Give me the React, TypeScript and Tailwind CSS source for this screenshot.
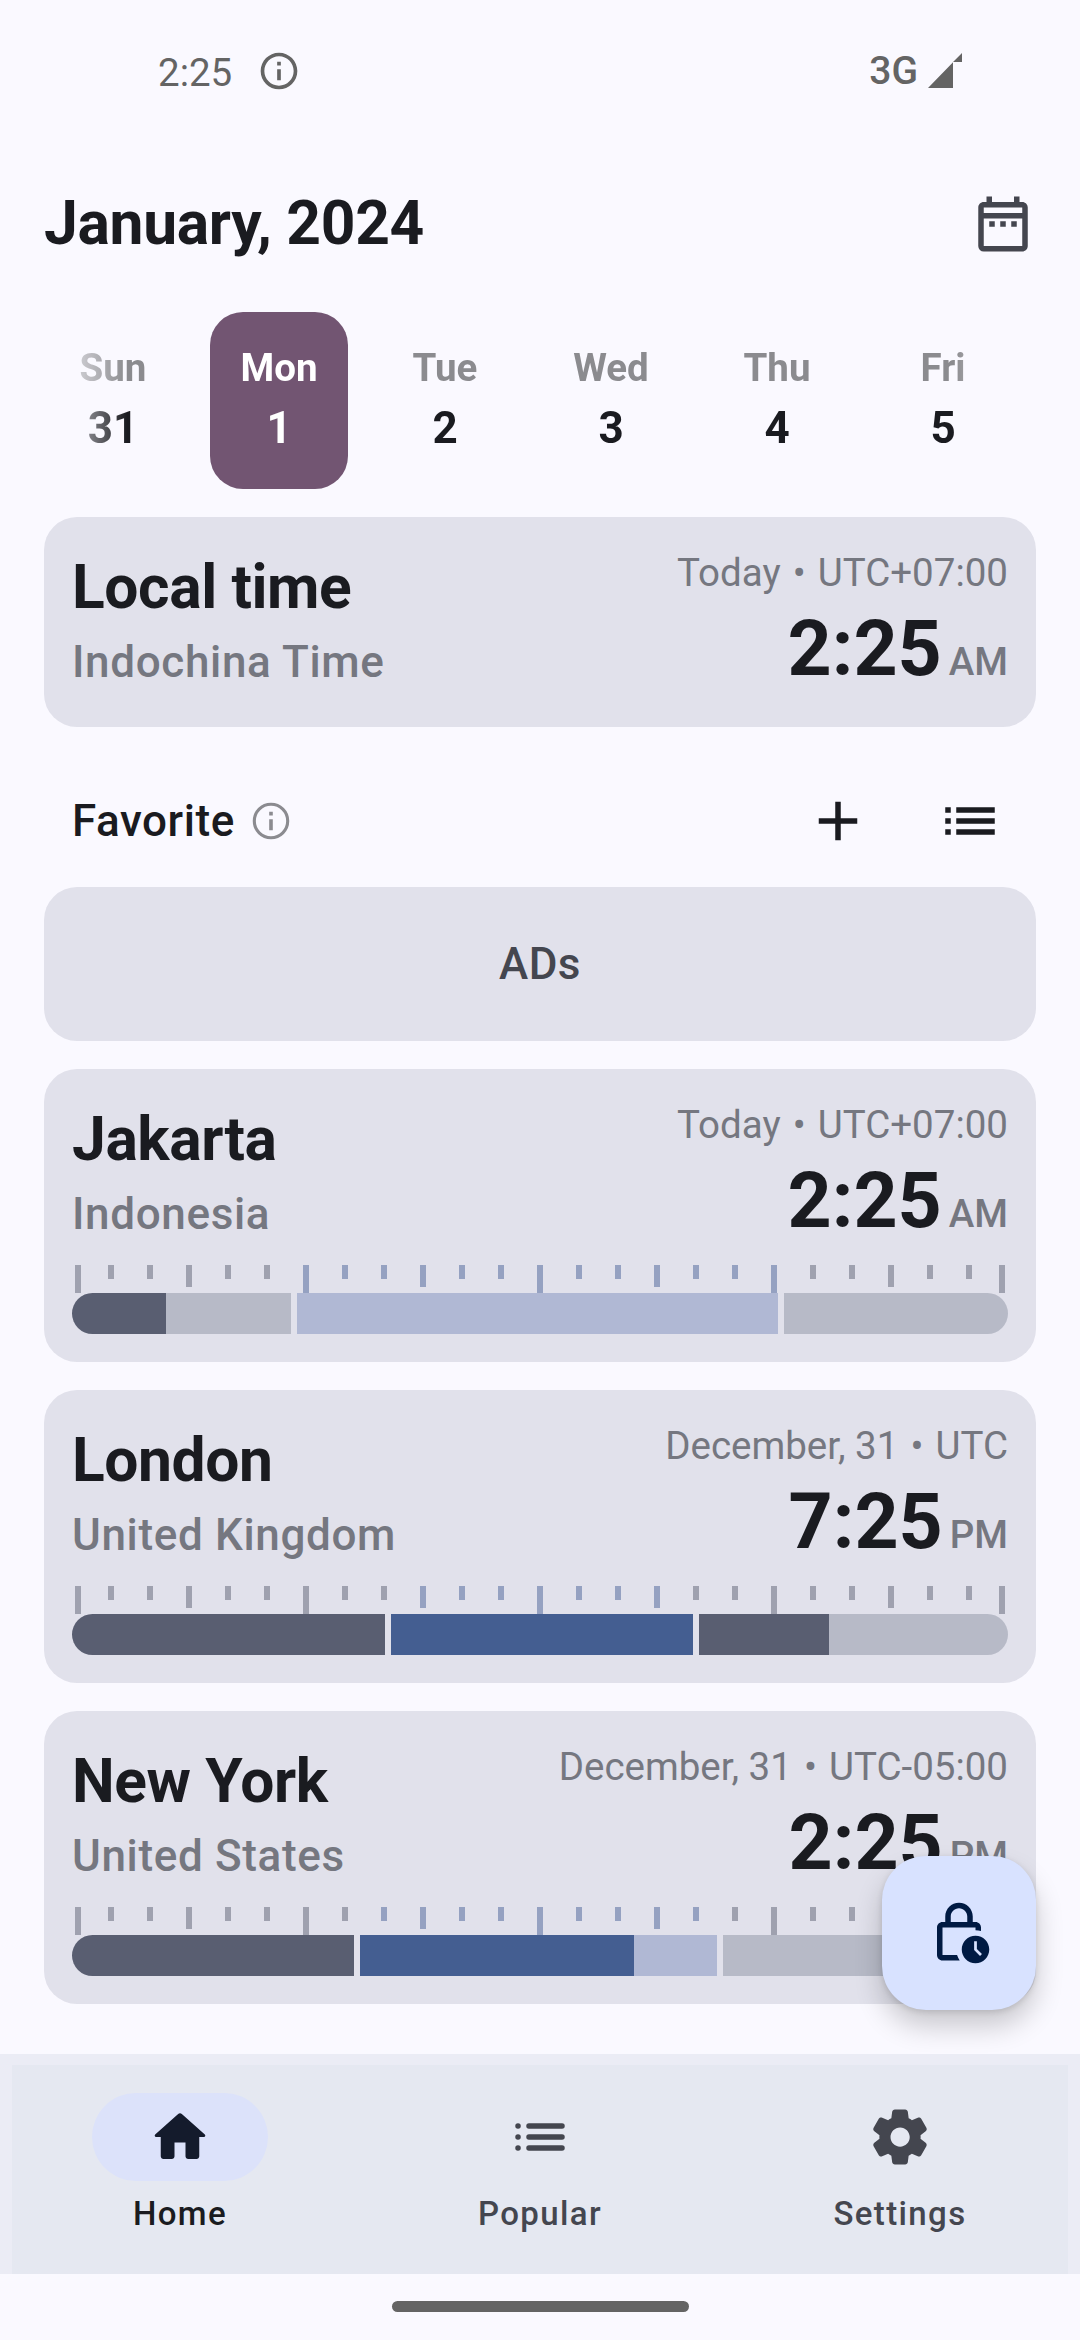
import React from "react";
import {
  MdAdd,
  MdInfoOutline,
  MdList,
  MdOutlineDateRange,
  MdOutlineLockClock,
} from "react-icons/md";

type Segment = { width: number; color: string };

type ClockInfo = {
  name: string;
  region: string;
  day: string;
  zone: string;
  time: string;
  period: string;
};

type City = ClockInfo & {
  dayStart: number;
  dayEnd: number;
  groups: Segment[][];
};

const NIGHT_PAST = "bg-[#595e71]";
const NIGHT_AHEAD = "bg-[#b7bac7]";
const DAY_PAST = "bg-[#445e91]";
const DAY_AHEAD = "bg-[#b0b8d4]";

const days = [
  { name: "Sun", date: "31" },
  { name: "Mon", date: "1" },
  { name: "Tue", date: "2" },
  { name: "Wed", date: "3" },
  { name: "Thu", date: "4" },
  { name: "Fri", date: "5" },
];

const cities: City[] = [
  {
    name: "Jakarta",
    region: "Indonesia",
    day: "Today",
    zone: "UTC+07:00",
    time: "2:25",
    period: "AM",
    dayStart: 6,
    dayEnd: 18,
    groups: [
      [
        { width: 94, color: NIGHT_PAST },
        { width: 125, color: NIGHT_AHEAD },
      ],
      [{ width: 481, color: DAY_AHEAD }],
      [{ width: 224, color: NIGHT_AHEAD }],
    ],
  },
  {
    name: "London",
    region: "United Kingdom",
    day: "December, 31",
    zone: "UTC",
    time: "7:25",
    period: "PM",
    dayStart: 9,
    dayEnd: 15,
    groups: [
      [{ width: 313, color: NIGHT_PAST }],
      [{ width: 302, color: DAY_PAST }],
      [
        { width: 130, color: NIGHT_PAST },
        { width: 179, color: NIGHT_AHEAD },
      ],
    ],
  },
  {
    name: "New York",
    region: "United States",
    day: "December, 31",
    zone: "UTC-05:00",
    time: "2:25",
    period: "PM",
    dayStart: 8,
    dayEnd: 16,
    groups: [
      [{ width: 282, color: NIGHT_PAST }],
      [
        { width: 274, color: DAY_PAST },
        { width: 83, color: DAY_AHEAD },
      ],
      [{ width: 285, color: NIGHT_AHEAD }],
    ],
  },
];

function StatusBar() {
  return (
    <div className="flex h-[158px] shrink-0 items-start pl-[158px] pr-[118px] text-[#646464]">
      <span className="mt-[51px] text-[38.5px] leading-[44px]">2:25</span>
      <MdInfoOutline className="ml-[25px] mt-[49px] size-[44px]" />
      <span className="ml-auto mt-[49px] text-[39px] font-medium leading-[44px]">3G</span>
      <svg className="ml-[10px] mt-[53px] h-[35px] w-[34px]" viewBox="0 0 34 35" fill="currentColor">
        <path d="M0 35 25 9.300V35zM25 9 34 0V9z" />
      </svg>
    </div>
  );
}

function Header() {
  return (
    <header className="flex h-[132px] shrink-0 items-center justify-between px-[44px]">
      <h1 className="text-[60.5px] font-bold leading-[84px] tracking-[-0.3px] text-[#1a1b20]">January, 2024</h1>
      <MdOutlineDateRange className="size-[66px] text-[#44464f]" />
    </header>
  );
}

function DayStrip() {
  return (
    <div className="mx-[44px] mt-[22px] flex shrink-0 gap-[28px] overflow-hidden [mask-image:linear-gradient(to_right,transparent,black_83px,black_909px,transparent)]">
      {days.map((day) => {
        const selected = day.name === "Mon";
        return (
          <div
            key={day.name}
            className={`flex h-[177px] w-[138px] shrink-0 flex-col items-center rounded-[33px] pt-[28px] font-bold ${
              selected ? "bg-[#725572] text-white" : "text-[#1a1b20]"
            }`}
          >
            <span className={`text-[38.5px] leading-[55px] ${selected ? "" : "text-[#8b8b8f]"}`}>
              {day.name}
            </span>
            <span className="text-[44px] leading-[66px]">{day.date}</span>
          </div>
        );
      })}
    </div>
  );
}

function ClockRow({ name, region, day, zone, time, period }: ClockInfo) {
  return (
    <div className="flex h-[150px] justify-between">
      <div className="flex flex-col">
        <h2 className="text-[60.5px] font-bold leading-[86px] tracking-[-0.4px] text-[#1a1b20]">{name}</h2>
        <p className="text-[44px] font-medium leading-[62px] tracking-[0.65px] text-[#757780]">{region}</p>
      </div>
      <div className="flex flex-col items-end">
        <p className="text-[38.5px] leading-[55px] text-[#757780]">
          {day} <span className="mx-[2.5px]">•</span> {zone}
        </p>
        <p className="flex items-baseline gap-[7px] leading-[99px]">
          <span className="text-[77px] font-bold text-[#1a1b20]">{time}</span>
          <span className="text-[38.5px] font-medium text-[#757780]">{period}</span>
        </p>
      </div>
    </div>
  );
}

function Ruler({ dayStart, dayEnd }: { dayStart: number; dayEnd: number }) {
  return (
    <div className="mt-[18px] flex h-[28px] gap-[33px] px-[3px]">
      {Array.from({ length: 25 }, (_, hour) => {
        const height = hour % 6 === 0 ? "h-[28px]" : hour % 3 === 0 ? "h-[22px]" : "h-[14px]";
        const color = hour >= dayStart && hour <= dayEnd ? "bg-[#95a1c1]" : "bg-[#9fa1af]";
        const edge = hour === 0 ? "-mr-[6px]" : hour === 24 ? "-ml-[6px]" : "";
        return <span key={hour} className={`w-[6px] shrink-0 ${height} ${color} ${edge}`} />;
      })}
    </div>
  );
}

function CityCard({ city }: { city: City }) {
  return (
    <article className="mt-[28px] h-[293px] shrink-0 rounded-[33px] bg-[#e1e1eb] p-[28px]">
      <ClockRow {...city} />
      <Ruler dayStart={city.dayStart} dayEnd={city.dayEnd} />
      <div className="flex h-[41px] gap-[6px] overflow-hidden rounded-full">
        {city.groups.map((group, i) => (
          <div key={i} className="flex">
            {group.map((segment, j) => (
              <div key={j} className={segment.color} style={{ width: segment.width }} />
            ))}
          </div>
        ))}
      </div>
    </article>
  );
}

function FavoriteHeader() {
  return (
    <div className="mt-[28px] flex h-[132px] shrink-0 items-center pl-[28px] text-[#1a1b20]">
      <h3 className="text-[44px] font-medium leading-[66px] tracking-[0.55px]">Favorite</h3>
      <svg className="ml-[14px] size-[44px] text-[#8b8b90]" viewBox="0 0 44 44" fill="none">
        <circle cx="22" cy="22" r="16.700" stroke="currentColor" strokeWidth="3.100" />
        <path d="M20.200 12.800h3.600v3.600h-3.600zM20.200 20.200h3.600v11h-3.600z" fill="currentColor" />
      </svg>
      <div className="ml-auto flex">
        <button className="flex size-[132px] items-center justify-center">
          <MdAdd className="size-[66px]" />
        </button>
        <button className="flex size-[132px] items-center justify-center">
          <MdList className="size-[66px]" />
        </button>
      </div>
    </div>
  );
}

function HomeIcon() {
  return (
    <svg className="size-[66px]" viewBox="0 0 24 24" fill="currentColor">
      <path d="M10 19v-5h4v5c0 .55.45 1 1 1h3c.55 0 1-.45 1-1v-7h1.700c.46 0 .68-.57.33-.87L12.670 3.600c-.38-.34-.96-.34-1.340 0l-8.360 7.530c-.34.3-.13.87.33.87H5v7c0 .55.45 1 1 1h3c.55 0 1-.45 1-1z" />
    </svg>
  );
}

function RoundListIcon() {
  return (
    <svg className="size-[66px]" viewBox="0 0 24 24" stroke="currentColor" strokeWidth="2" strokeLinecap="round">
      <path d="M4 8h.01M4 12h.01M4 16h.01M8 8h12M8 12h12M8 16h12" />
    </svg>
  );
}

function SettingsIcon() {
  return (
    <svg className="size-[66px]" viewBox="0 0 24 24" fill="currentColor">
      <path d="M19.500 12c0-.23-.01-.45-.03-.68l1.860-1.410c.4-.3.51-.86.26-1.300l-1.870-3.230c-.25-.44-.79-.62-1.250-.42l-2.150.91c-.37-.26-.76-.49-1.170-.68l-.29-2.310c-.06-.5-.49-.88-.99-.88h-3.730c-.51 0-.94.38-1 .88l-.29 2.310c-.41.19-.8.42-1.170.68l-2.150-.91c-.46-.2-1-.02-1.250.42L2.410 8.620c-.25.44-.14.99.26 1.300l1.860 1.410c-.02.22-.03.44-.03.67s.01.45.03.68l-1.860 1.410c-.4.3-.51.86-.26 1.300l1.870 3.230c.25.44.79.62 1.250.42l2.150-.91c.37.26.76.49 1.170.68l.29 2.310c.06.5.49.88.99.88h3.730c.5 0 .93-.38.99-.88l.29-2.310c.41-.19.8-.42 1.170-.68l2.150.91c.46.2 1 .02 1.250-.42l1.870-3.230c.25-.44.14-.99-.26-1.300l-1.860-1.410c.03-.23.04-.45.04-.68zm-7.460 3.500c-1.930 0-3.500-1.570-3.500-3.500s1.570-3.500 3.500-3.500 3.500 1.570 3.500 3.500-1.570 3.500-3.500 3.500z" />
    </svg>
  );
}

function NavItem({ label, active, children }: { label: string; active?: boolean; children: React.ReactNode }) {
  return (
    <button className={`flex flex-1 flex-col items-center pt-[28px] ${active ? "text-[#141b2c]" : "text-[#44464f]"}`}>
      <span
        className={`flex h-[88px] w-[176px] items-center justify-center rounded-full ${
          active ? "bg-[#dce2fa]" : ""
        }`}
      >
        {children}
      </span>
      <span
        className={`mt-[11px] text-[33px] font-medium leading-[44px] tracking-[1.375px] ${
          active ? "text-[#1a1b20]" : ""
        }`}
      >
        {label}
      </span>
    </button>
  );
}

function BottomNav() {
  return (
    <nav className="h-[220px] shrink-0 bg-[#ebecf5] px-[12px] pt-[11px]">
      <div className="h-full bg-[#e5e8f1]">
        <div className="-mx-[12px] flex">
          <NavItem label="Home" active>
            <HomeIcon />
          </NavItem>
          <NavItem label="Popular">
            <RoundListIcon />
          </NavItem>
          <NavItem label="Settings">
            <SettingsIcon />
          </NavItem>
        </div>
      </div>
    </nav>
  );
}

export default function App() {
  return (
    <div className="flex h-[2340px] w-[1080px] flex-col overflow-hidden bg-[#faf9ff] font-['Roboto',sans-serif]">
      <StatusBar />
      <Header />
      <div className="relative flex flex-1 flex-col overflow-hidden">
        <DayStrip />
        <main className="flex flex-col px-[44px]">
          <section className="mt-[28px] h-[210px] shrink-0 rounded-[33px] bg-[#e1e1eb] p-[28px]">
            <ClockRow
              name="Local time"
              region="Indochina Time"
              day="Today"
              zone="UTC+07:00"
              time="2:25"
              period="AM"
            />
          </section>
          <FavoriteHeader />
          <div className="flex h-[154px] shrink-0 items-center justify-center rounded-[33px] bg-[#e1e1eb] text-[44px] font-medium tracking-[0.41px] text-[#44464f]">
            ADs
          </div>
          {cities.map((city) => (
            <CityCard key={city.name} city={city} />
          ))}
        </main>
        <button className="absolute bottom-[44px] right-[44px] flex size-[154px] items-center justify-center rounded-[44px] bg-[#d8e2ff] text-[#001a43] shadow-[0_16px_28px_rgba(0,0,0,0.2),0_2px_6px_rgba(0,0,0,0.12)]">
          <MdOutlineLockClock className="size-[66px]" />
        </button>
      </div>
      <BottomNav />
      <div className="flex h-[66px] shrink-0 justify-center pt-[27px]">
        <div className="h-[11px] w-[297px] rounded-full bg-[#646464]" />
      </div>
    </div>
  );
}
